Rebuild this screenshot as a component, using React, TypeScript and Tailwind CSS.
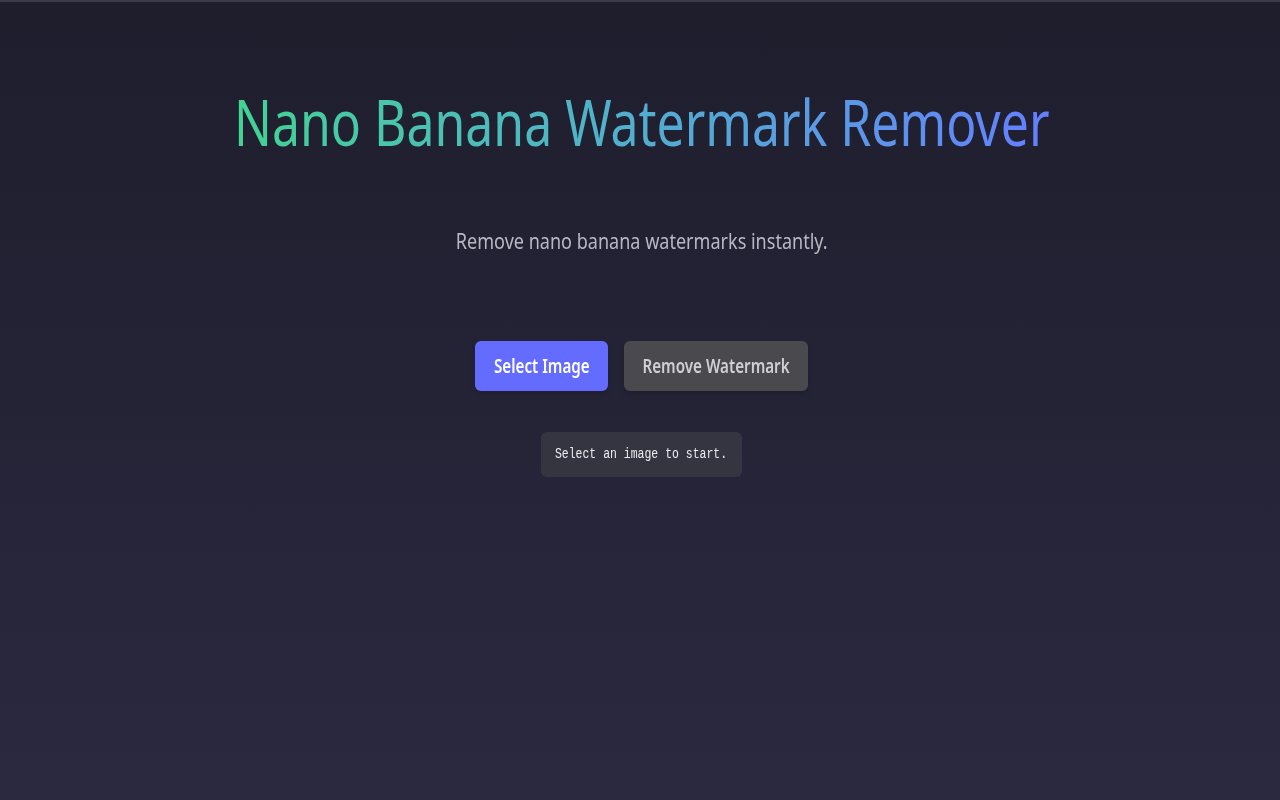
export default function App() {
    return (
        <div className="min-h-screen w-full bg-gradient-to-b from-[#1e1e2d] to-[#2a2940] border-t-2 border-[#3a3a48] font-['Noto_Sans',sans-serif]">
            <div className="flex flex-col items-center pt-[80px] pl-[3px]">
                <h1 className="scale-x-[0.78] whitespace-nowrap text-[64px] leading-[80px] font-normal bg-gradient-to-r from-[#42d392] to-[#647eff] bg-clip-text text-transparent">
                    Nano Banana Watermark Remover
                </h1>
                <p className="mt-[63px] scale-x-[0.82] whitespace-nowrap text-[22px] leading-[30px] text-[#b8b8c4]">
                    Remove nano banana watermarks instantly.
                </p>
                <div className="mt-[86px] flex gap-4">
                    <button className="h-[50px] w-[133px] rounded-md bg-[#646cff] text-white shadow-md">
                        <span className="inline-block scale-x-[0.8] whitespace-nowrap text-[19px] font-semibold">Select Image</span>
                    </button>
                    <button className="h-[50px] w-[184px] rounded-md bg-[#4a4a4e] text-[#d0d0d4] shadow-md">
                        <span className="inline-block scale-x-[0.8] whitespace-nowrap text-[19px] font-semibold">Remove Watermark</span>
                    </button>
                </div>
                <div className="mt-[41px] h-[45px] w-[201px] rounded-md bg-[#353542] flex items-center justify-center">
                    <span className="scale-x-[0.82] whitespace-nowrap font-['Liberation_Mono',monospace] text-[14px] text-[#ececf0]">
                        Select an image to start.
                    </span>
                </div>
            </div>
        </div>
    );
}
